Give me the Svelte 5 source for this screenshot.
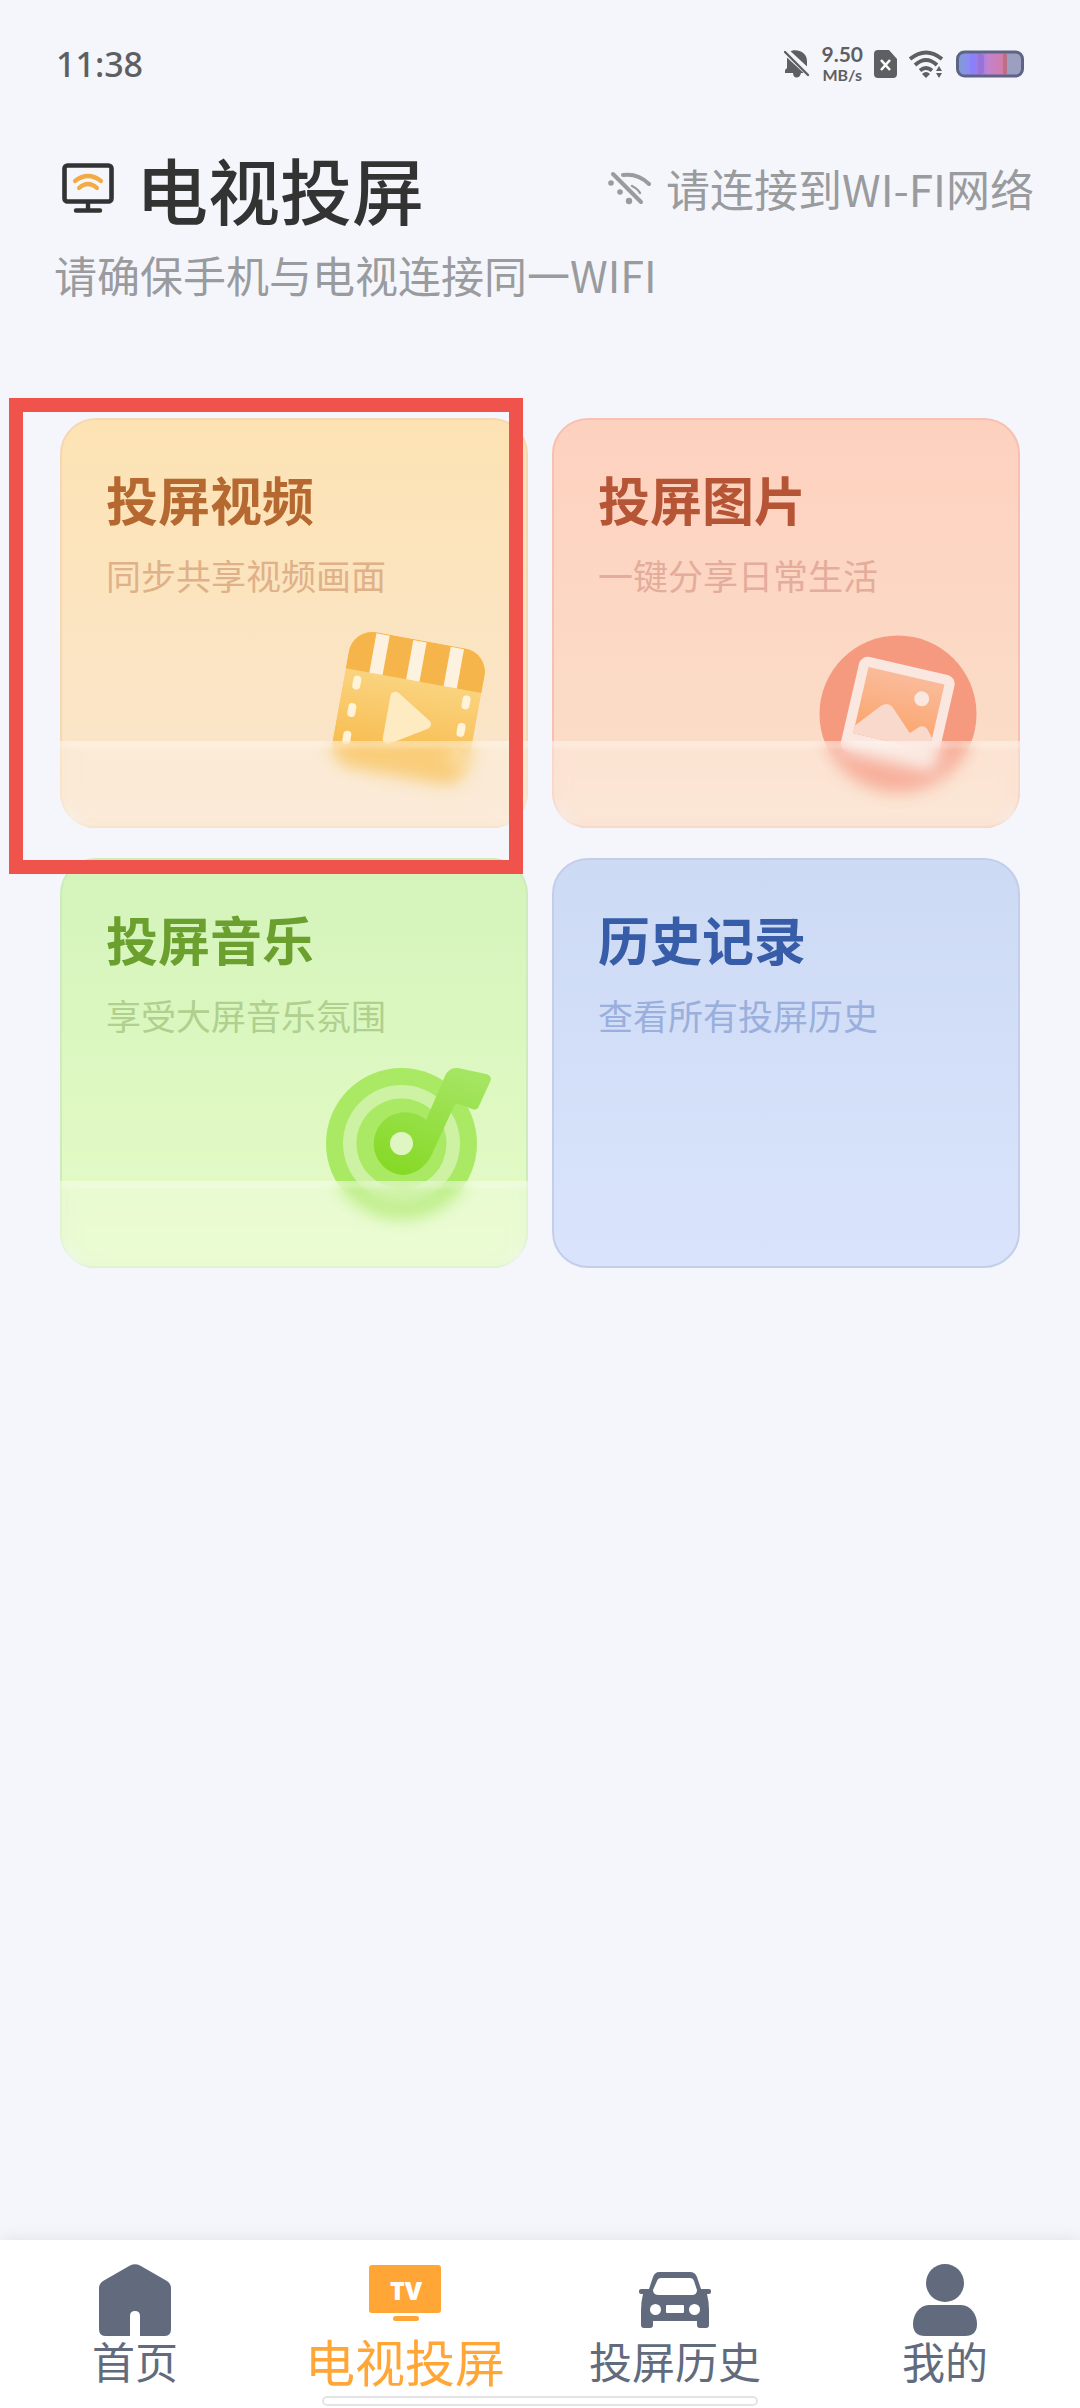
<script>
  const cards = [
    { id: "video", title: "投屏视频", desc: "同步共享视频画面", glass: true },
    { id: "photo", title: "投屏图片", desc: "一键分享日常生活", glass: true },
    { id: "music", title: "投屏音乐", desc: "享受大屏音乐氛围", glass: true },
    { id: "history", title: "历史记录", desc: "查看所有投屏历史", glass: false },
  ];

  const tabs = [
    { id: "home", label: "首页" },
    { id: "tv", label: "电视投屏" },
    { id: "car", label: "投屏历史" },
    { id: "me", label: "我的" },
  ];

  let highlighted = $state("video");
  let activeTab = $state("tv");
</script>

<div class="page">
  <div class="status">
    <span class="time">11:38</span>
    <div class="status-icons">
      <svg width="26" height="28" viewBox="0 0 26 28">
        <path d="M5 2 C11 -2 23 1 23 11 V18 L25 22 V23 H17 C16 29 9 29 9 23 H1 V20 L3 18 V9 C3 6 4 4 5 2Z" fill="#5e5f62" />
        <path d="M-1 -1 L27 25" stroke="#f5f6fb" stroke-width="7" />
        <path d="M1 2 L24 25" stroke="#5e5f62" stroke-width="2.4" stroke-linecap="round" />
      </svg>
      <div class="speed">
        <span class="rate">9.50</span>
        <span class="unit">MB/s</span>
      </div>
      <svg width="24" height="28" viewBox="0 0 24 28">
        <path d="M4 0 H15 L23 9 V24 Q23 28 19 28 H4 Q0 28 0 24 V4 Q0 0 4 0Z" fill="#5e5f62" />
        <path d="M7 10 L16 20 M16 10 L7 20" stroke="#fff" stroke-width="2.6" />
      </svg>
      <svg width="36" height="28" viewBox="0 0 36 28">
        <g fill="none" stroke="#5e5f62" stroke-width="3.8">
          <path d="M1 9 Q17 -4 33 9" />
          <path d="M6 15 Q17 5 28 15" />
          <path d="M11 20.500 Q17 15.500 23 20.500" />
        </g>
        <path d="M13 24 Q17 20 21 24 L17 28Z" fill="#5e5f62" />
        <path d="M27 21 L30 16 L33 21Z M27 23 H33 L30 28Z" fill="#5e5f62" />
      </svg>
      <svg class="battery" width="68" height="28" viewBox="0 0 68 28">
        <defs>
          <linearGradient id="charge">
            <stop offset="0" stop-color="#829bd4" />
            <stop offset=".2" stop-color="#8a8df2" />
            <stop offset=".4" stop-color="#9b7be0" />
            <stop offset=".6" stop-color="#c183d0" />
            <stop offset="1" stop-color="#d87a9c" />
          </linearGradient>
        </defs>
        <rect x="1.500" y="2" width="65" height="24" rx="7" fill="#9d9fc0" />
        <path d="M8 3 H51 V25 H8 Q3 25 3 20 V8 Q3 3 8 3Z" fill="url(#charge)" />
        <rect x="14" y="4" width="6" height="20" rx="3" fill="#8a80fa" />
        <rect x="22" y="4" width="6" height="20" rx="3" fill="#9672dd" />
        <rect x="47" y="4" width="4" height="20" fill="#bd6f86" />
        <rect x="1.500" y="2" width="65" height="24" rx="7" fill="none" stroke="#5d6485" stroke-width="3" />
      </svg>
    </div>
  </div>

  <header>
    <div class="heading">
      <svg width="52" height="50" viewBox="0 0 52 50">
        <rect x="2.500" y="2.500" width="47" height="36" rx="3" fill="none" stroke="#333" stroke-width="4.600" />
        <path d="M26 39 V47 M14 47.500 H38" stroke="#333" stroke-width="4.400" stroke-linecap="round" />
        <path d="M13 18 Q26 8 39 18 M17 25 Q26 17 35 25" fill="none" stroke="#f2ab42" stroke-width="4.200" stroke-linecap="round" />
      </svg>
      <h1>电视投屏</h1>
    </div>
    <div class="network">
      <svg width="44" height="34" viewBox="0 0 44 34">
        <path d="M5 3 L33 31" stroke="#999b9e" stroke-width="4" stroke-linecap="round" />
        <path d="M15 4 Q30 2 41 13" fill="none" stroke="#999b9e" stroke-width="4" stroke-linecap="round" />
        <path d="M24 15 Q30 18 32 22" fill="none" stroke="#999b9e" stroke-width="2.400" stroke-linecap="round" />
        <circle cx="3" cy="12" r="2.800" fill="#999b9e" />
        <circle cx="12" cy="21" r="2.800" fill="#999b9e" />
        <circle cx="21" cy="30" r="3.200" fill="#999b9e" />
      </svg>
      <span>请连接到WI-FI网络</span>
    </div>
  </header>
  <p class="hint">请确保手机与电视连接同一WIFI</p>

  <main>
    {#each cards as card (card.id)}
      <button type="button" class="card {card.id}" onclick={() => (highlighted = card.id)}>
        <span class="title">{card.title}</span>
        <span class="desc">{card.desc}</span>

        {#if card.id === "video"}
          <svg class="art" viewBox="0 0 170 170">
            <defs>
              <linearGradient id="film" x1="0" y1="0" x2="0" y2="1">
                <stop offset=".3" stop-color="#fad37e" />
                <stop offset=".8" stop-color="#f8bf55" />
              </linearGradient>
              <clipPath id="filmClip"><rect width="138" height="138" rx="24" /></clipPath>
            </defs>
            <g transform="translate(31 4) rotate(10.300)" clip-path="url(#filmClip)">
              <rect width="138" height="138" fill="url(#film)" />
              <rect width="138" height="41" fill="#f5b54a" />
              <g fill="#fdf1e0">
                <rect x="24" y="1" width="13.500" height="40" />
                <rect x="61.500" y="1" width="13.500" height="40" />
                <rect x="99.500" y="1" width="13.500" height="40" />
              </g>
              <g fill="#fff3d8">
                {#each [46, 74, 102] as y}
                  <rect x="9.500" {y} width="8" height="14" rx="4" />
                  <rect x="120.500" {y} width="8" height="14" rx="4" />
                {/each}
              </g>
              <path d="M54 60 V103 L89 81.500Z" fill="#feebc2" stroke="#feebc2" stroke-width="10" stroke-linejoin="round" />
            </g>
          </svg>
        {:else if card.id === "photo"}
          <svg class="art" viewBox="0 0 170 170">
            <defs>
              <linearGradient id="sky" x1="0" y1="0" x2="0" y2="1">
                <stop offset="0" stop-color="#fabb9b" />
                <stop offset=".8" stop-color="#fba873" />
              </linearGradient>
            </defs>
            <circle cx="84" cy="90" r="78.500" fill="#f5997f" />
            <g transform="translate(47 31) rotate(13)">
              <rect width="98" height="98" rx="9" fill="#fae7df" />
              <rect x="10" y="10" width="78" height="68" fill="url(#sky)" />
              <path d="M10 78 V70 L31 45 Q38 38 45 46 L65 65 L72 58 Q77 53 82 58 L88 65 V78Z" fill="#f9d9cc" />
              <circle cx="69" cy="29" r="7.500" fill="#fae7df" />
            </g>
          </svg>
        {:else if card.id === "music"}
          <svg class="art" viewBox="0 0 170 170">
            <defs>
              <linearGradient id="note" gradientUnits="userSpaceOnUse" x1="120" y1="4" x2="80" y2="112">
                <stop offset="0" stop-color="#a4e561" />
                <stop offset="1" stop-color="#86d926" />
              </linearGradient>
            </defs>
            <circle cx="79.500" cy="79.500" r="75.500" fill="#a9e963" />
            <circle cx="79.500" cy="79.500" r="58.500" fill="#cdf2a4" />
            <circle cx="79.500" cy="79.500" r="45" fill="#a9e963" />
            <path
              d="M104 56 L123 12 Q127 3 136 4 L164 10 Q171 12 168 18 L157 42 Q155 47 150 45 L137 40 Q134 39 132 42 L110 90 C104 103 93 111 79.500 111 A31.500 31.500 0 1 1 104 56Z"
              fill="url(#note)"
            />
            <circle cx="79.500" cy="79.500" r="11.500" fill="#dff6c2" />
          </svg>
        {/if}

        {#if card.glass}
          <span class="glass"></span>
        {/if}
        {#if highlighted === card.id}
          <span class="marker"></span>
        {/if}
      </button>
    {/each}
  </main>

  <nav>
    {#each tabs as tab (tab.id)}
      <a href="#{tab.id}" class:active={activeTab === tab.id} onclick={() => (activeTab = tab.id)}>
        <svg width="72" height="72" viewBox="0 0 72 72" fill="currentColor">
          {#if tab.id === "home"}
            <path d="M31 1.500 Q36 -1 41 1.500 L68 17 Q72 20 72 24 V65 Q72 72 66 72 H41 V52 Q41 47 36 47 Q31 47 31 52 V72 H6 Q0 72 0 65 V24 Q0 20 4 17Z" />
          {:else if tab.id === "tv"}
            <rect y="1" width="72" height="48" rx="3" />
            <rect x="24" y="52" width="26" height="5" rx="2.500" />
            <text x="37" y="36" text-anchor="middle">TV</text>
          {:else if tab.id === "car"}
            <path
              fill-rule="evenodd"
              d="M20 8 H51 Q56 8 58 13 L62 25 H70 Q72 25 72 27 V28 Q72 30 70 30 H68 Q70 38 70 46 V61 Q70 64 67 64 H61 Q58 64 58 61 V57 H14 V61 Q14 64 11 64 H5 Q2 64 2 61 V46 Q2 38 4 30 H2 Q0 30 0 28 V27 Q0 25 2 25 H10 L14 13 Q16 8 20 8Z M22 14 Q19 14 18 17 L14 26 Q14 31 20 31 H53 Q58 31 58 26 L55 17 Q54 14 51 14Z M28 41 Q27 41 27 42 V48 Q27 49 28 49 H44 Q45 49 45 48 V42 Q45 41 44 41Z M11 45.500 a5.500 5.500 0 1 0 11 0 a5.500 5.500 0 1 0 -11 0Z M50 45.500 a5.500 5.500 0 1 0 11 0 a5.500 5.500 0 1 0 -11 0Z"
            />
          {:else}
            <circle cx="36" cy="19" r="19" />
            <path d="M20 41 H52 C62 41 68 51 68 60 Q68 72 56 72 H16 Q4 72 4 60 C4 51 10 41 20 41Z" />
          {/if}
        </svg>
        <span>{tab.label}</span>
      </a>
    {/each}
    <div class="gesture"></div>
  </nav>
</div>

<style>
  :global(body) {
    margin: 0;
    background: #f5f6fb;
  }

  .page {
    display: flex;
    flex-direction: column;
    min-height: 100vh;
    background: #f5f6fb;
    font-family: "Noto Sans CJK SC", sans-serif;
  }

  svg {
    display: block;
    flex-shrink: 0;
  }

  .status {
    display: flex;
    align-items: center;
    justify-content: space-between;
    height: 64px;
    padding: 32px 56px 0;
    color: #5e5f62;
    font-family: "Noto Sans", sans-serif;
    font-weight: 500;
  }

  .time {
    font-size: 34px;
    line-height: 48px;
  }

  .status-icons {
    display: flex;
    align-items: center;
    gap: 11px;
  }

  .speed {
    display: flex;
    flex-direction: column;
    align-items: center;
    font-family: Lato, sans-serif;
    font-weight: 700;
  }

  .rate {
    font-size: 21px;
    line-height: 22px;
  }

  .unit {
    font-size: 16px;
    line-height: 20px;
  }

  header {
    display: flex;
    align-items: center;
    justify-content: space-between;
    padding: 44px 46px 0 62px;
  }

  .heading {
    display: flex;
    align-items: center;
    gap: 22px;
  }

  h1 {
    margin: 0;
    color: #333;
    font-size: 72px;
    font-weight: 500;
    line-height: 96px;
  }

  .network {
    display: flex;
    align-items: center;
    gap: 14px;
    color: #999b9e;
    font-size: 44px;
    line-height: 60px;
  }

  .hint {
    margin: 8px 54px 0;
    color: #999b9e;
    font-size: 43px;
    line-height: 60px;
  }

  main {
    display: grid;
    grid-template-columns: 1fr 1fr;
    gap: 30px 24px;
    padding: 114px 60px 60px;
  }

  .card {
    position: relative;
    display: flex;
    flex-direction: column;
    align-items: flex-start;
    height: 410px;
    padding: 45px 44px;
    border: 2px solid;
    border-radius: 36px;
    font-family: inherit;
    text-align: left;
    cursor: pointer;
  }

  .title {
    font-size: 52px;
    font-weight: 700;
    line-height: 68px;
  }

  .desc {
    margin-top: 18px;
    font-size: 35px;
    font-weight: 400;
    line-height: 48px;
  }

  .video {
    z-index: 1;
    border-color: #f7d7b1;
    background: linear-gradient(#fde3b4, #f9e5cd);
    color: #b56830;
  }

  .video .desc {
    color: #dfb188;
  }

  .photo {
    border-color: #f8c0b2;
    background: linear-gradient(#fed1bf, #fadfc9);
    color: #b65535;
  }

  .photo .desc {
    color: #e4ac9b;
  }

  .music {
    border-color: #cdebbb;
    background: linear-gradient(#d3f4bb, #e6fbc7);
    color: #6b9f2e;
  }

  .music .desc {
    color: #b0d08d;
  }

  .history {
    border-color: #c3cfea;
    background: linear-gradient(#cddaf4, #d9e4fc);
    color: #385da8;
  }

  .history .desc {
    color: #9aafdc;
  }

  .art {
    position: absolute;
    right: 34px;
    bottom: 32px;
    width: 170px;
    height: 170px;
  }

  /* frosted strip over the lower part of the artwork */
  .glass {
    position: absolute;
    right: -2px;
    bottom: -2px;
    left: -2px;
    height: 87px;
    border-radius: 0 0 36px 36px;
    background: linear-gradient(rgba(255, 255, 255, 0.4) 5px, rgba(255, 255, 255, 0.22) 10px);
    backdrop-filter: blur(8px);
  }

  .marker {
    position: absolute;
    inset: -22px 3px -48px -53px;
    border: 14px solid #f0524c;
  }

  nav {
    position: relative;
    display: grid;
    grid-template-columns: repeat(4, 1fr);
    height: 144px;
    margin-top: auto;
    padding-top: 24px;
    background: #fff;
    box-shadow: 0 0 16px rgba(60, 65, 90, 0.12);
  }

  nav a {
    display: flex;
    flex-direction: column;
    align-items: center;
    color: #626b7e;
    font-size: 43px;
    line-height: 48px;
    text-decoration: none;
  }

  nav a.active {
    color: #ffa637;
    font-size: 50px;
  }

  nav text {
    fill: #fff;
    font-family: "Open Sans", sans-serif;
    font-size: 25px;
    font-weight: 800;
  }

  .gesture {
    position: absolute;
    bottom: 2px;
    left: 50%;
    box-sizing: border-box;
    width: 436px;
    height: 10px;
    border: 2px solid #e4e4e4;
    border-radius: 5px;
    background: #fff;
    transform: translateX(-50%);
  }
</style>
